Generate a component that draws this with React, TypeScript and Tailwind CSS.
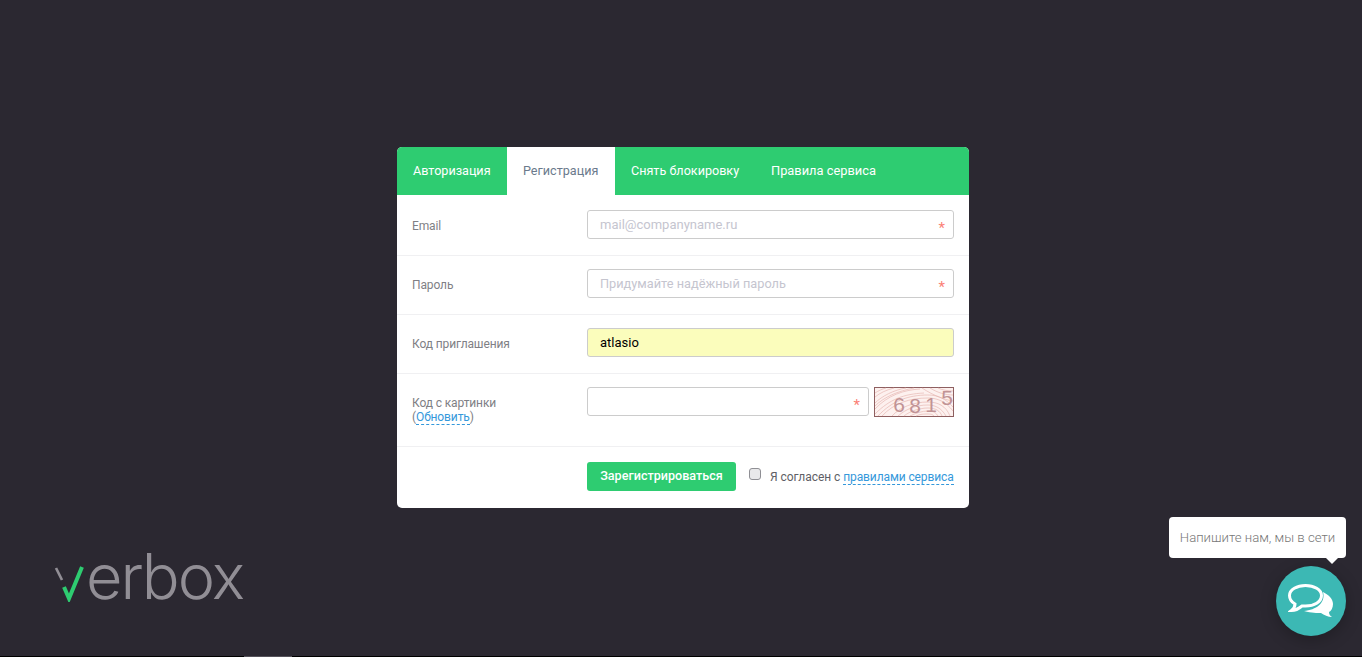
export default function App() {
  const font = { fontFamily: "Roboto, 'Liberation Sans', sans-serif" };
  const Label = ({ children }: { children: React.ReactNode }) => (
    <div className="w-[175px] shrink-0 text-[12px] leading-[15px] tracking-[-0.12px] text-[#7f7f85]">{children}</div>
  );
  const Star = () => (
    <span className="absolute right-[9px] top-[11px] text-[15px] leading-[15px] text-[#fb7f76]">*</span>
  );
  const inputCls =
    "h-[29px] w-full rounded-[3px] border border-[#cccccc] bg-white pl-[12px] pr-[24px] text-[13px] outline-none placeholder:text-[#c5c5cf]";
  const digit = { fontFamily: "'Liberation Sans', sans-serif" };
  return (
    <div className="relative h-[657px] w-[1362px] overflow-hidden bg-[#2b2831] pt-[147px]" style={font}>
      <div className="ml-[397px] w-[572px] overflow-hidden rounded-[5px] bg-white">
        <div className="flex h-[48px] items-center bg-[#2ecc71] text-[12.6px] text-white">
          <div className="flex h-full w-[110px] items-center pl-[16px]">Авторизация</div>
          <div className="flex h-full w-[108px] items-center bg-white pl-[16px] text-[#6b7a8c]">Регистрация</div>
          <div className="flex h-full w-[140px] items-center pl-[16px]">Снять блокировку</div>
          <div className="flex h-full items-center pl-[16px] text-[12.85px]">Правила сервиса</div>
        </div>
        <div className="flex h-[61px] items-start border-b border-[#f0f0f2] px-[15px] pt-[15px]">
          <div className="pt-[9px]"><Label>Email</Label></div>
          <div className="relative flex-1">
            <input className={inputCls} placeholder="mail@companyname.ru" readOnly />
            <Star />
          </div>
        </div>
        <div className="flex h-[59px] items-start border-b border-[#f0f0f2] px-[15px] pt-[13px]">
          <div className="pt-[9px]"><Label>Пароль</Label></div>
          <div className="relative flex-1">
            <input className={`${inputCls} !text-[12.75px]`} placeholder="Придумайте надёжный пароль" readOnly />
            <Star />
          </div>
        </div>
        <div className="flex h-[59px] items-start border-b border-[#f0f0f2] px-[15px] pt-[13px]">
          <div className="pt-[9px]"><Label>Код приглашения</Label></div>
          <div className="relative flex-1">
            <input className={`${inputCls} !bg-[#fbfdbc] text-black`} value="atlasio" readOnly />
          </div>
        </div>
        <div className="flex h-[73px] items-start border-b border-[#f0f0f2] px-[15px] pt-[13px]">
          <div className="pt-[9px]">
            <Label>
              <div className="leading-[14px]">
                Код с картинки
                <br />(<span className="border-b border-dashed border-[#3498db] text-[#3498db]">Обновить</span>)
              </div>
            </Label>
          </div>
          <div className="flex flex-1 gap-[5px]">
            <div className="relative flex-1">
              <input className={inputCls} readOnly />
              <Star />
            </div>
            <svg width="80" height="30" viewBox="0 0 80 30" className="shrink-0">
              <rect x="0.5" y="0.5" width="79" height="29" fill="#fdf1ef" stroke="#8e5f60" />
              <g fill="none" stroke="#e3aeaa" strokeWidth="0.6">
                <path d="M1 22C14 8 30 3 46 2" />
                <path d="M1 27C16 12 30 7 50 6" />
                <path d="M4 29C18 14 34 8 54 8C64 8 72 12 79 20" />
                <path d="M8 29C20 16 36 11 54 11C64 11 72 15 79 24" />
                <path d="M18 29C26 20 40 15 54 15C64 15 72 19 76 29" />
                <path d="M24 29C32 22 42 18 54 18C62 18 68 22 72 29" />
                <path d="M30 29C36 24 46 21 54 21C62 21 66 24 68 29" />
                <path d="M36 29C42 26 48 24 54 24C60 24 62 26 64 29" />
                <path d="M42 29C46 27 50 27 54 27C58 27 59 28 60 29" />
                <path d="M1 6C4 4 8 2 12 1" />
                <path d="M1 10C6 6 12 3 20 1" />
                <path d="M1 16C8 9 20 3 32 1" />
                <path d="M1 19C10 10 24 4 40 1" />
                <path d="M56 1C64 6 72 8 79 8" />
                <path d="M48 1C60 9 72 13 79 14" />
                <path d="M64 1C68 3 74 4 79 4" />
              </g>
              <text x="25" y="25" fill="#c19395" fontSize="21" textAnchor="middle" style={digit}>6</text>
              <text x="41" y="26" fill="#c19395" fontSize="21" textAnchor="middle" style={digit}>8</text>
              <text x="57" y="25" fill="#c19395" fontSize="21" textAnchor="middle" style={digit}>1</text>
              <text x="73" y="18" fill="#c19395" fontSize="21" textAnchor="middle" style={digit}>5</text>
            </svg>
          </div>
        </div>
        <div className="flex h-[61px] items-start pl-[190px] pt-[15px]">
          <button className="h-[29px] w-[149px] rounded-[3px] bg-[#2ecc71] text-[12.6px] font-medium text-white">
            Зарегистрироваться
          </button>
          <span className="ml-[13px] mt-[6px] h-[12px] w-[12px] rounded-[3px] border border-[#8f8f94] bg-[#e8e8ea]" />
          <span className="ml-[9px] mt-[8px] whitespace-nowrap text-[12px] leading-[15px] tracking-[-0.05px] text-[#5f5f66]">
            Я согласен с{" "}
            <span className="border-b border-dashed border-[#3498db] text-[#3498db] tracking-[-0.1px]">правилами сервиса</span>
          </span>
        </div>
      </div>

      {/* logo */}
      <div className="absolute left-[54px] top-[540px] flex items-start">
        <svg width="32" height="37" viewBox="0 0 32 37" className="mt-[25px] shrink-0">
          <path d="M2 3L8 15" stroke="#918e95" strokeWidth="2.6" fill="none" />
          <path d="M10 22L15 33.5L28 2" stroke="#2ecc71" strokeWidth="4" fill="none" />
        </svg>
        <span className="text-[63px] font-[350] leading-[72px] tracking-[-2px] text-[#918e95]" style={{ fontFamily: "Inter, sans-serif" }}>
          erbox
        </span>
      </div>

      {/* chat */}
      <div className="absolute left-[1169px] top-[517px] flex h-[41px] w-[177px] items-center justify-center rounded-[4px] bg-white text-[13.2px] font-light text-[#777777]">
        Напишите нам, мы в сети
        <span className="absolute bottom-[-6px] right-[7px] h-0 w-0 border-x-[7px] border-t-[7px] border-x-transparent border-t-white" />
      </div>
      <div className="absolute left-[1276px] top-[566px] flex h-[70px] w-[70px] items-center justify-center rounded-full bg-[#3cb8b4] shadow-[0_4px_16px_rgba(0,0,0,0.25)]">
        <svg width="46" height="36" viewBox="0 0 46 36" fill="none">
          <path d="M35 9C41 12 45 16 45 21C45 25 43 28 41 29C41 31 42 33 44 34C40 34 36 32 33 30C29 30 24 30 16 28C28 27 38 20 35 9Z" fill="white" />
          <path d="M17.5 2.5C9 2.5 1.5 6.5 1.5 12.5C1.5 16 3.5 19 7 21C7 23.5 5.5 26 3.5 27.5C7.5 27.5 11 25.5 14 23C15 23 16.5 23 17.5 23C26 23 33.5 19 33.5 12.5C33.5 6.5 26 2.5 17.5 2.5Z" fill="#3cb8b4" stroke="white" strokeWidth="3" />
        </svg>
      </div>
      <div className="absolute bottom-0 left-0 h-[1px] w-full bg-black" />
      <div className="absolute bottom-0 left-[244px] h-[1px] w-[48px] bg-[#55525a]" />
    </div>
  );
}
